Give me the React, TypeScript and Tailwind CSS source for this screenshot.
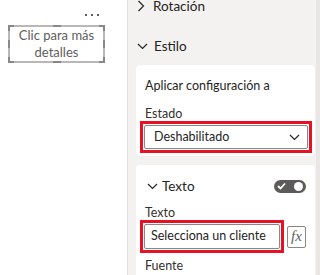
import React from 'react';

const font = { fontFamily: 'Lato, Roboto, "Noto Sans", sans-serif' };

const ChevronRight = () => (
    <svg width="8" height="12" viewBox="0 0 8 12" fill="none" className="shrink-0">
        <polyline points="1.5,1 6.5,6 1.5,11" stroke="#252423" strokeWidth="1.2" />
    </svg>
);

const ChevronDown = ({ className = '' }: { className?: string }) => (
    <svg width="11" height="7" viewBox="0 0 11 7" fill="none" className={`shrink-0 ${className}`}>
        <polyline points="1,1 5.5,5.5 10,1" stroke="#252423" strokeWidth="1.2" />
    </svg>
);

const Handle = ({ className }: { className: string }) => (
    <div className={`absolute bg-[#8a8886] ${className}`} />
);

const Visual: React.FC = () => (
    <div className="relative ml-[8px] mt-[9px] w-[97px] h-[38px] border-2 border-[#b9b8b7] bg-white flex flex-col items-center justify-center whitespace-nowrap">
        <Handle className="-left-[2px] -top-[2px] w-[6px] h-[2px]" />
        <Handle className="-left-[2px] -top-[2px] w-[2px] h-[6px]" />
        <Handle className="-right-[2px] -top-[2px] w-[6px] h-[2px]" />
        <Handle className="-right-[2px] -top-[2px] w-[2px] h-[6px]" />
        <Handle className="-left-[2px] -bottom-[2px] w-[6px] h-[2px]" />
        <Handle className="-left-[2px] -bottom-[2px] w-[2px] h-[6px]" />
        <Handle className="-right-[2px] -bottom-[2px] w-[6px] h-[2px]" />
        <Handle className="-right-[2px] -bottom-[2px] w-[2px] h-[6px]" />
        <Handle className="left-[43px] -top-[2px] w-[8px] h-[2px]" />
        <Handle className="left-[43px] -bottom-[2px] w-[8px] h-[2px]" />
        <Handle className="-left-[2px] top-[13px] w-[2px] h-[8px]" />
        <Handle className="-right-[2px] top-[13px] w-[2px] h-[8px]" />
        <span className="text-[13px] leading-[17px] text-[#605e5c]">Clic para más</span>
        <span className="text-[13px] leading-[17px] text-[#605e5c]">detalles</span>
    </div>
);

const Toggle = () => (
    <div className="w-[32px] h-[13px] rounded-full bg-[#5c5b5a] flex items-center justify-between px-[3px]">
        <svg width="9" height="8" viewBox="0 0 9 8" fill="none">
            <polyline points="1,4 3.5,6.5 8,1.5" stroke="white" strokeWidth="1.8" />
        </svg>
        <div className="w-[9px] h-[9px] rounded-full bg-white" />
    </div>
);

export default function App() {
    return (
        <div className="flex w-[320px] h-[275px] overflow-hidden bg-white text-[#252423] whitespace-nowrap" style={font}>
            <div className="w-[128px] shrink-0 border-r border-[#e1dfdd] bg-white">
                <div className="flex justify-end gap-[4px] pr-[28px] pt-[14px]">
                    <span className="w-[2px] h-[2px] bg-[#605e5c]" />
                    <span className="w-[2px] h-[2px] bg-[#605e5c]" />
                    <span className="w-[2px] h-[2px] bg-[#605e5c]" />
                </div>
                <Visual />
            </div>
            <div className="flex-1 bg-[#f3f2f1] flex flex-col border-r-[4px] border-[#e8e7e6]">
                <div className="flex items-center gap-[8px] h-[20px] -mt-[4px] pl-[9px]">
                    <ChevronRight />
                    <span className="text-[13.5px]">Rotación</span>
                </div>
                <div className="mt-[9px] h-px bg-[#e1dfdd]" />
                <div className="flex items-center gap-[6px] h-[20px] mt-[11px] pl-[9px]">
                    <ChevronDown />
                    <span className="text-[13.5px]">Estilo</span>
                </div>
                <div className="mt-[9px] ml-[8px] mr-[1px] bg-white rounded-[4px] px-[9px] pt-[11px] pb-[3px] shadow-[0_0_1px_rgba(0,0,0,0.08)]">
                    <div className="text-[12.5px] leading-[20px]">Aplicar configuración a</div>
                    <div className="mt-[11px] text-[12.5px] leading-[14px] text-[#323130]">Estado</div>
                    <div className="-ml-[5px] -mr-[6px] border-[3px] border-[#e81123] p-px">
                        <div className="h-[24px] border border-[#8a8886] rounded-[2px] flex items-center justify-between pl-[9px] pr-[7px]">
                            <span className="text-[12.5px]">Deshabilitado</span>
                            <ChevronDown />
                        </div>
                    </div>
                </div>
                <div className="mt-[9px] ml-[8px] mr-[1px] bg-white rounded-t-[4px] px-[9px] pt-[11px] flex-1">
                    <div className="flex items-center justify-between h-[20px]">
                        <div className="flex items-center gap-[4px] pl-[2px]">
                            <ChevronDown />
                            <span className="text-[13.5px]">Texto</span>
                        </div>
                        <Toggle />
                    </div>
                    <div className="mt-[10px] text-[12.5px] leading-[14px] text-[#323130]">Texto</div>
                    <div className="flex items-center -ml-[5px]">
                        <div className="w-[144px] border-[3px] border-[#e81123] p-px">
                            <div className="h-[25px] border border-[#8a8886] rounded-[2px] flex items-center pl-[6px]">
                                <span className="text-[12.5px]">Selecciona un cliente</span>
                            </div>
                        </div>
                        <div className="ml-[3px] w-[19px] h-[22px] border border-[#8a8886] rounded-[2px] flex items-center justify-center">
                            <span className="italic text-[15px] text-[#605e5c] leading-none" style={{ fontFamily: '"Liberation Serif", serif' }}>fx</span>
                        </div>
                    </div>
                    <div className="mt-[3px] text-[12.5px] leading-[20px] text-[#323130]">Fuente</div>
                </div>
            </div>
        </div>
    );
}
